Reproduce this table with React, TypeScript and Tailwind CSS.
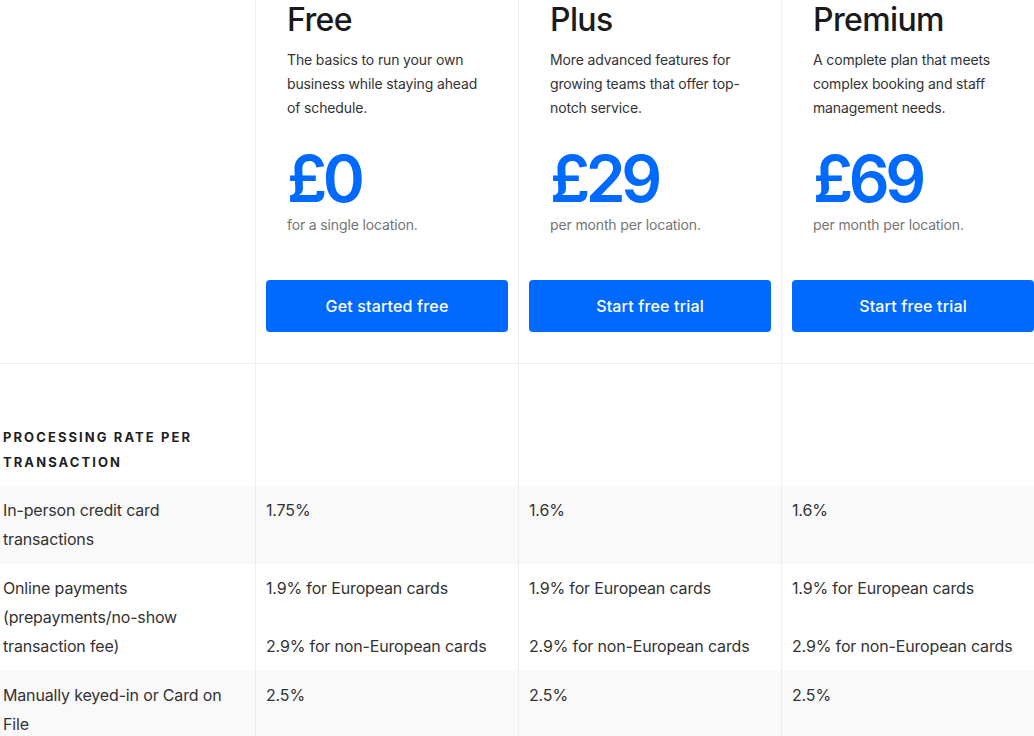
const plans = [
  {
    name: 'Free',
    desc: 'The basics to run your own business while staying ahead of schedule.',
    price: '£0',
    note: 'for a single location.',
    cta: 'Get started free',
  },
  {
    name: 'Plus',
    desc: 'More advanced features for growing teams that offer top-notch service.',
    price: '£29',
    note: 'per month per location.',
    cta: 'Start free trial',
  },
  {
    name: 'Premium',
    desc: 'A complete plan that meets complex booking and staff management needs.',
    price: '£69',
    note: 'per month per location.',
    cta: 'Start free trial',
  },
]

const rows = [
  {
    label: 'In-person credit card transactions',
    values: [['1.75%'], ['1.6%'], ['1.6%']],
    shaded: true,
  },
  {
    label: 'Online payments (prepayments/no-show transaction fee)',
    values: [
      ['1.9% for European cards', '2.9% for non-European cards'],
      ['1.9% for European cards', '2.9% for non-European cards'],
      ['1.9% for European cards', '2.9% for non-European cards'],
    ],
    shaded: false,
  },
  {
    label: 'Manually keyed-in or Card on File',
    values: [['2.5%'], ['2.5%'], ['2.5%']],
    shaded: true,
  },
]

export default function App() {
  return (
    <div
      className="w-[1034px] h-[736px] overflow-hidden bg-white text-[#333]"
      style={{ fontFamily: 'Inter, "Noto Sans", sans-serif' }}
    >
      <div className="w-[1044px]">
        {/* Plan headers */}
        <div className="grid grid-cols-[255px_263px_263px_263px] border-b border-[#eeeeee]">
          <div />
          {plans.map((p) => (
            <div key={p.name} className="border-l border-[#eeeeee] px-[10px] pb-[31px]">
              <div className="px-[21px]">
                <h2 className="text-[32px] leading-[39px] font-medium tracking-[-0.02em] text-[#1a1a1a]">{p.name}</h2>
                <p className="mt-[9px] text-[14px] leading-[24px] tracking-[-0.01em] text-[#333] pr-[2px]">{p.desc}</p>
                <div className="mt-[27px] text-[64px] leading-[64px] font-semibold tracking-[-0.07em] text-[#006aff]">
                  {p.price}
                </div>
                <p className="mt-[2px] text-[14px] leading-[24px] tracking-[-0.01em] text-[#757575]">{p.note}</p>
              </div>
              <button className="mt-[43px] w-full h-[52px] rounded-[4px] bg-[#006aff] text-white text-[16px] font-medium tracking-[0.01em]">
                {p.cta}
              </button>
            </div>
          ))}
        </div>

        {/* Section header */}
        <div className="grid grid-cols-[255px_263px_263px_263px]">
          <div className="pl-[3px] pr-[40px] pt-[61px] pb-[11px] text-[13px] leading-[25px] font-bold tracking-[0.16em] uppercase text-[#1f1f1f]">
            Processing rate per transaction
          </div>
          <div className="border-l border-[#eeeeee]" />
          <div className="border-l border-[#eeeeee]" />
          <div className="border-l border-[#eeeeee]" />
        </div>

        {/* Rows */}
        {rows.map((r) => (
          <div
            key={r.label}
            className={`grid grid-cols-[255px_263px_263px_263px] text-[16px] leading-[29px] tracking-[-0.01em] ${
              r.shaded ? 'bg-[#f9f9f9]' : 'bg-white'
            }`}
          >
            <div className="pl-[3px] pr-[20px] py-[10px]">{r.label}</div>
            {r.values.map((v, i) => (
              <div key={i} className="border-l border-[#eeeeee] px-[10px] py-[10px]">
                {v.map((line, j) => (
                  <p key={j} className={j > 0 ? 'mt-[29px]' : ''}>
                    {line}
                  </p>
                ))}
              </div>
            ))}
          </div>
        ))}
      </div>
    </div>
  )
}
